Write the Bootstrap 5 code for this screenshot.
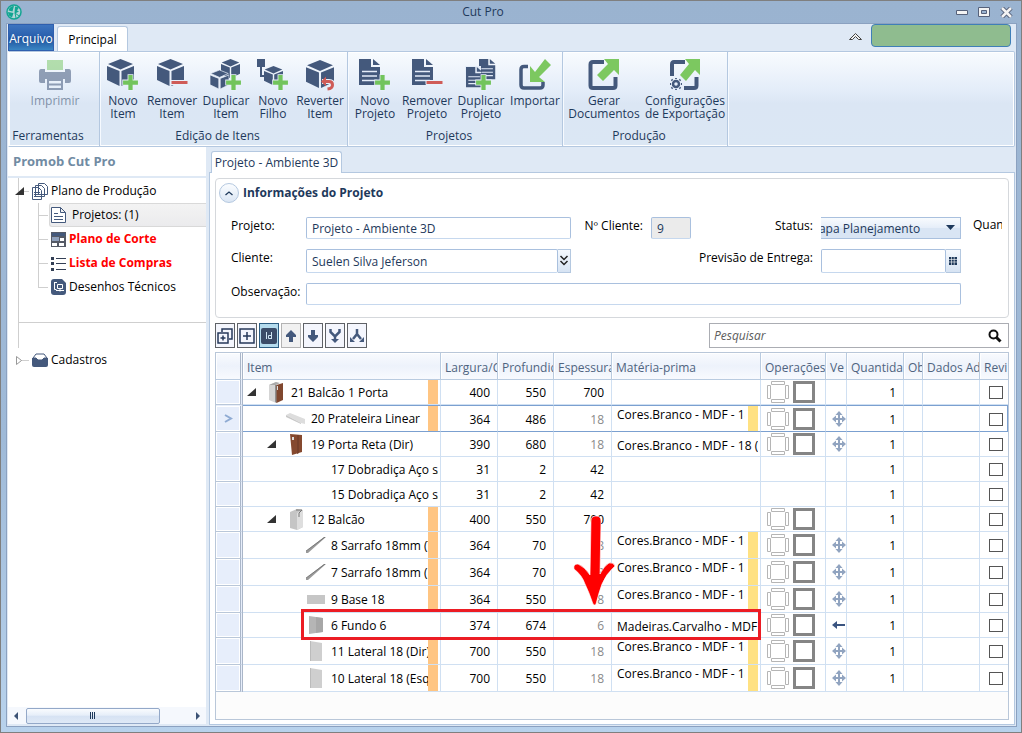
<!DOCTYPE html>
<html lang="pt-BR">
<head>
<meta charset="utf-8">
<meta name="viewport" content="width=device-width, initial-scale=1">
<title>Cut Pro</title>
<link href="https://cdn.jsdelivr.net/npm/bootstrap@5.3.0/dist/css/bootstrap.min.css" rel="stylesheet">
<style>
:root{--navy:#1e395b;--ico:#44597c;--line:#b4c8e0;--pane:#dfe9f5;--soft:#d0e0f2}
body{font:12px/16px "Open Sans","Noto Sans",sans-serif;color:#000}
button,input,select{font:inherit;color:inherit}
.win{min-height:100vh;border:1px solid #7f7f7f;background:linear-gradient(#9ab3d0,#9fbad8 60%,#b8d2ec);padding:0 4px 5px 5px}
.titlebar{height:22px;color:var(--navy)}
.titlebar .caption{padding-right:56px}
.winbtn{border:0;background:none;padding:0;width:22px;height:20px;line-height:0}
.client{border:1px solid #8ba1c0;background:var(--pane);padding:0 1px 1px}
.tabrow{height:27px}
.tab-file{width:46px;height:27px;border:1px solid #2f5fae;color:#fff;background:linear-gradient(#3d74bf,#2a60ae 45%,#1f529c 55%,#3a86c4);padding:2px 0 0;white-space:nowrap}
.tab-main{width:71px;height:25px;border:1px solid var(--line);border-bottom:0;border-radius:3px 3px 0 0;background:#fff;padding:2px 0 0;margin-left:3px}
.account{width:140px;height:23px;border:1px solid #3f7fb8;border-radius:4px;background:#8fbc8f}
.ribbon{height:96px;border:1px solid var(--line);border-left-color:#fff;border-radius:0 2px 2px 0;background:linear-gradient(#f8fbfe,#e4edf9 40%,#dbe6f4 55%,#dbe7f4);box-shadow:inset 0 0 0 1px #fff;color:var(--navy)}
.rgroup{border-right:1px solid var(--line);box-shadow:1px 0 0 #f6faff}
.rtools{display:grid;padding-top:7px;height:76px}
.rtools button{border:0;background:none;padding:0;line-height:13px;display:flex;flex-direction:column;align-items:center;white-space:nowrap}
.rtools svg{width:32px;height:32px;margin-bottom:3px;flex:none}
.rname{text-align:center;padding-right:12px}
.g1{width:91px}.g1 .rtools{grid-template-columns:92px}
.g2{width:248px}.g2 .rtools{grid-template-columns:46px 52px 56px 38px 56px}
.g3{width:215px}.g3 .rtools{grid-template-columns:54px 50px 58px 50px}
.g4{width:165px}.g4 .rtools{grid-template-columns:82px 80px}
.side{width:198px;background:#fff;margin-bottom:1px}
.side h1{font-size:13px;line-height:29px;font-weight:700;color:#718ba3;padding-left:5px;margin:0;border-bottom:2px solid var(--pane)}
.tree{margin-left:10px;border-left:1px solid #cfcfcf;height:170px;padding-top:1px}
.tree ul{background:linear-gradient(#cfcfcf,#cfcfcf) 0 0/1px calc(100% - 12px) no-repeat;margin:0 0 0 19px;padding:0}
.trow{height:24px;display:flex;align-items:center;position:relative;white-space:nowrap}
.trow::before{content:"";width:10px;border-top:1px solid #cfcfcf;margin-right:3px;flex:none}
.trow a{color:#000;text-decoration:none;display:flex;align-items:center;gap:3px;flex:1;height:24px}
.trow .hot{color:#f00;font-weight:700}
.trow .sel{background:linear-gradient(#f3f3f3,#ebebed);border:1px solid #d9d9d9;border-right:0;border-radius:3px 0 0 3px;margin-left:-2px;padding-left:1px;gap:6px}
.twist{position:absolute;left:-4px;top:8px;width:9px;height:9px}
.trow.base{margin-left:11px}
.cut{border-top:1px solid #cfcfcf;margin-top:23px}
.hbar{height:17px;background:#f5f8fd;margin-top:auto;padding:0 5px}
.hbar .thumb{width:134px;height:16px;border:1px solid #93a8c8;border-radius:2px;background:linear-gradient(#f9fbfe,#e6eef9 45%,#d6e2f3 50%,#dfe9f6)}
.main{margin-left:3px;min-width:0}
.doctab{height:22px;margin:4px 0 0 2px;width:131px;border:1px solid var(--line);border-bottom:0;border-radius:3px 3px 0 0;background:#fff;color:var(--navy);padding:0;white-space:nowrap;position:relative;z-index:1}
.sheet{border:1px solid var(--line);background:#fff;margin-top:-1px;padding:5px 5px 4px}
.info{border:1px solid #d5d8dc;border-radius:4px;height:140px;padding:3px 6px 0 3px;margin-bottom:5px}
.info h2{font-size:12px;line-height:20px;font-weight:700;color:var(--navy);margin:0;padding-top:1px}
.round{width:20px;height:20px;border:1px solid #b4c8e0;border-radius:50%;background:linear-gradient(#fbfdff,#dbe6f4);padding:0;line-height:0}
.fgrid{display:grid;grid-template-columns:75px 265px 80px 40px 130px 140px 1fr;grid-template-rows:22px 24px 22px;row-gap:10px;margin:14px 0 0 12px}
.fgrid label{line-height:18px;white-space:nowrap;overflow:hidden}
.fgrid .rt{text-align:right;padding-right:8px}
.fgrid .span2{grid-column:span 2}
.fgrid .span5{grid-column:span 5}
.fgrid .more{padding-left:12px}
.field{border:1px solid #a9c0de;border-bottom-color:#c6d8ee;border-radius:2px;background:#fff;color:var(--navy);padding:1px 5px 0;width:100%;min-width:0;height:100%}
.field:disabled{background:#ebebeb}
.side-btn{border:1px solid #b4c8e0;border-left:0;background:linear-gradient(#f5f9fe,#d6e3f3);padding:0;line-height:0;flex:none}
.pick{position:relative;overflow:hidden;border:solid #a9c0de;border-width:1px 1px 1px 0;background:linear-gradient(#f8fbfe,#e6eef9 48%,#d9e5f4 52%)}
.pick select{appearance:none;border:0;background:none;color:var(--navy);position:absolute;right:0;top:1px;width:162px;height:20px;padding:0 0 0 10px}
.pick svg{position:absolute;right:5px;top:7px}
.tools{gap:2px}
.tbtn{width:20px;height:25px;border:1px solid #5f6267;background:#f4f6fd;padding:0;line-height:0}
.tbtn.on{background:#b5dcee;border-color:#2c5d82}
.tbtn:disabled{background:#f1f1f1;border-color:#b3b3b3}
.find{width:300px;height:25px;border:1px solid #abadb3}
.find input{border:0;outline:0;font-style:italic;padding:0 4px;min-width:0;background:none}
.find input::placeholder{color:#5c5c5c;opacity:1}
.find button{border:0;background:none;padding:0 6px;line-height:0}
.gridbox{position:relative;border:1px solid #b9c7d9;background:#fcfcfc;margin-top:4px}
.grid{table-layout:fixed;width:100%;border-collapse:separate;border-spacing:0;background:#fff}
.grid th{height:27px;font-weight:400;color:#4f6480;border-right:1px solid #b9cbe0;border-bottom:1px solid #b9cbe0;background:linear-gradient(#f9fbfe,#edf2fb 50%,#f8fafe);padding:4px 0 0 4px;white-space:nowrap;overflow:hidden;box-shadow:inset 1px 1px 0 #fff}
.grid td{height:25px;padding:0;border-right:1px solid var(--soft);border-bottom:1px solid var(--soft);overflow:hidden;white-space:nowrap}
.grid .tall td{height:27px}
.grid th:last-child,.grid td:last-child{border-right:0;text-align:center}
.grid th:last-child{padding-right:4px}
.grid td:first-child{background:#e7eefb;border-right:3px double #aab6c8;border-bottom-color:#b9c7d9;box-shadow:inset 0 0 0 1px #fff;text-align:center;line-height:0}
.grid th:first-child{border-right:3px double #aab6c8}
.grid .num{text-align:right;padding-right:7px;padding-top:2px}
.grid .dim{color:#8a8a8a}
.grid .current td{border-top:1px solid #7ba0d0;border-bottom:1px solid #7ba0d0}
.grid .current td:last-child{border-right:1px solid #7ba0d0}
.grid .current td:first-child{border-top-color:#e7eefb;border-bottom-color:#b9c7d9}
.cellrow{display:flex;align-items:center;height:24px;margin-right:2px}
.tall .cellrow{height:26px}
.current .cellrow{height:25px}
.cellrow .label{flex:1;overflow:hidden;display:flex;gap:3px;padding:1px 0 0 2px}
.cellrow .mat{flex:1;overflow:hidden;padding:3px 0 0 5px}
.flagged .mat{align-self:flex-start;padding-top:1px;margin-right:3px}
.sw{flex:none;width:16px;line-height:0}
.pic{flex:none;width:26px;height:24px;display:flex;align-items:center;justify-content:center}
.lv0{padding-left:4px}.lv1{padding-left:24px}.lv2{padding-left:44px}
.bar{flex:none;width:10px;align-self:stretch}
.bar.o{background:#ffc582}.bar.y{background:#ffe182}
.ops{display:flex;gap:4px;padding-left:6px;line-height:0}
.grid .dir{padding-left:6px;line-height:0}
.grid input[type=checkbox]{appearance:none;width:14px;height:13px;border:1px solid #555;background:#fff;margin:0 0 0 4px;vertical-align:middle}
.redbox{position:absolute;left:85px;top:256px;width:460px;height:31px;border:3px solid #ec1c24;pointer-events:none}
.redarrow{position:absolute;left:357px;top:162px;width:42px;height:92px;pointer-events:none}
</style>
</head>
<body>
<svg width="0" height="0" class="position-absolute" aria-hidden="true">
<defs>
<symbol id="cube" viewBox="0 0 27 27"><path fill="#44597c" d="M13.500 0 26 5 13.500 10.500 1 5zM0 7l12.500 5v15L0 21zM27 7l-12.500 5v15L27 21z"/></symbol>
<symbol id="plus" viewBox="0 0 16 16"><path fill="#72c45c" stroke="#e8f0fa" stroke-width="1.500" paint-order="stroke" d="M6 1h4v5h5v4h-5v5H6v-5H1V6h5z"/></symbol>
<symbol id="page" viewBox="0 0 22 27"><path fill="#44597c" d="M0 0h12v8h9v18H0z"/><path fill="#44597c" d="M14 0l7 6h-7z"/><path stroke="#e4ecf8" stroke-width="1.500" fill="none" d="M3 12.500h8l7 0M3 17h15M3 21.500h15"/></symbol>
<symbol id="prn" viewBox="0 0 32 32"><g opacity=".55"><path fill="#7ec96c" d="M8 1h16v10H8z"/><path fill="#44597c" d="M2 10h4v3h20v-3h4q2 0 2 3v9q0 2-2 2h-4v-4H6v4H2q-2 0-2-2v-9q0-3 2-3z"/><path fill="none" stroke="#44597c" stroke-width="2" d="M9 21h14v9H9zM9 25.500h14"/></g></symbol>
<symbol id="ni" viewBox="0 0 32 32"><use href="#cube" width="27" height="27"/><use href="#plus" x="15" y="15" width="17" height="17"/></symbol>
<symbol id="ri" viewBox="0 0 32 32"><use href="#cube" x="1" width="27" height="27"/><path fill="#cf5c58" stroke="#e8f0fa" d="M15 21.500h17v4H15z"/></symbol>
<symbol id="di" viewBox="0 0 32 32"><use href="#cube" x="11" width="19" height="19"/><use href="#cube" x="0" y="11" width="19" height="19" stroke="#e8f0fa" stroke-width="1"/><use href="#plus" x="15" y="15" width="17" height="17"/></symbol>
<symbol id="nf" viewBox="0 0 32 32"><path fill="#44597c" d="M0 0h8v8H0z"/><path fill="none" stroke="#44597c" stroke-width="2" d="M4 7v10h5"/><use href="#cube" x="7" y="7" width="19" height="19"/><use href="#plus" x="15" y="15" width="17" height="17"/></symbol>
<symbol id="rv" viewBox="0 0 32 32"><use href="#cube" x="2" y="1" width="28" height="28"/><path fill="none" stroke="#e6eef9" stroke-width="5" d="M18 22.500h7q4 0 4 4t-5 4"/><path fill="none" stroke="#cf5c58" stroke-width="3" d="M20 22.500h5q3.500 0 3.500 3.500t-5 4"/><path fill="#cf5c58" d="M17 22.500l5-5v10z"/></symbol>
<symbol id="np" viewBox="0 0 32 32"><use href="#page" width="22" height="27"/><use href="#plus" x="15" y="15" width="17" height="17"/></symbol>
<symbol id="rp" viewBox="0 0 32 32"><use href="#page" x="1" width="22" height="27"/><path fill="#cf5c58" stroke="#e8f0fa" d="M15 21.500h17v4H15z"/></symbol>
<symbol id="dp" viewBox="0 0 32 32"><use href="#page" x="14" width="17" height="21"/><path fill="#e6eef9" d="M0 7h16v22H0z"/><use href="#page" x="1" y="8" width="17" height="21"/><use href="#plus" x="10" y="15" width="17" height="17"/></symbol>
<symbol id="im" viewBox="0 0 32 32"><path fill="none" stroke="#44597c" stroke-width="3.500" d="M9 7.500H5q-3 0-3 3V26q0 3 3 3h16q3 0 3-3v-3"/><path fill="#7cc860" d="M26 0l6 6-12 12 6 5H11V7l5 6z"/></symbol>
<symbol id="gd" viewBox="0 0 32 32"><path fill="none" stroke="#44597c" stroke-width="4" d="M16 3H5Q2.500 3 2.500 5.500v21q0 2.500 2.500 2.500h20q2.500 0 2.500-2.500V18"/><path fill="#7cc860" d="M16 0h15v16l-5-5-11 11-6-6 11-11z"/></symbol>
<symbol id="ce" viewBox="0 0 32 32"><path fill="none" stroke="#44597c" stroke-width="4" d="M16 3H5Q3 3 3 5.500V17M15 29h10q2.500 0 2.500-2.500V18"/><path fill="#7cc860" d="M16 0h15v16l-5-5-9 11-6-6 9-11z"/><circle cx="7" cy="25" r="3" fill="none" stroke="#44597c" stroke-width="2.500"/><path stroke="#44597c" stroke-width="1.800" d="M7 20v-1M7 30v1M2 25H1M12 25h1M3.500 21.500l-1-1M10.500 28.500l1 1M3.500 28.500l-1 1M10.500 21.500l1-1"/></symbol>
<symbol id="down" viewBox="0 0 9 9"><path fill="#333" d="M9 0v8H0z"/></symbol>
<symbol id="p21" viewBox="0 0 16 21"><path fill="#d5d5d5" d="M1 3l7-3v21l-7-3z"/><path fill="#aaa" d="M1 3l7-3 4 1-4 2z"/><path fill="#8f8f8f" d="M7 3h2v18l-2-1z"/><path fill="#80472f" d="M8.500 3L15 1v17l-6.500 3z"/><path stroke="#ddd" d="M9.500 4v4"/></symbol>
<symbol id="p20" viewBox="0 0 20 12"><path fill="#ddd" d="M0 2l4-2 15 6v5l-4-1z"/><path fill="#c8c8c8" d="M0 2l15 8v1L0 4z"/></symbol>
<symbol id="p19" viewBox="0 0 13 21"><path fill="#85492f" d="M0 0l12 1v17L2 21z"/><path fill="#76402a" d="M7 1h2v18l-2 1z"/><path fill="#ddd" d="M2 3h2v3H2z"/></symbol>
<symbol id="p12" viewBox="0 0 15 21"><path fill="#c5c5c5" d="M1 3l7-3 6 1v17l-6 3-7-2z"/><path fill="#dedede" d="M8 4l6-3v17l-6 3z"/><path fill="none" stroke="#777" d="M7 1h6L10 4v4"/></symbol>
<symbol id="pst" viewBox="0 0 20 16"><path fill="#9a9a9a" d="M0 14L18 0h2L2 16H0z"/><path stroke="#666" stroke-width=".7" d="M0 14L19 0"/></symbol>
<symbol id="pbs" viewBox="0 0 18 9"><path fill="#c6c6c6" d="M0 0h18v9H0z"/></symbol>
<symbol id="pfd" viewBox="0 0 14 18"><path fill="#b5b5b5" d="M0 0l14 2v14L0 18z"/><path fill="#999" opacity=".5" d="M7 1l7 1v14l-7 1z"/></symbol>
<symbol id="plt" viewBox="0 0 12 20"><path fill="#cfcfcf" d="M0 0l12 2v18L0 20z"/><path fill="#bbb" d="M0 0h1v20H0z"/></symbol>
<symbol id="bord" viewBox="0 0 22 22"><path fill="none" stroke="#b5b5b5" d="M4.500.500h13v3h-13zM4.500 18.500h13v3h-13zM.5 4.500h3v13h-3zM18.500 4.500h3v13h-3z"/></symbol>
<symbol id="sq" viewBox="0 0 22 22"><path fill="none" stroke="#858585" stroke-width="3" d="M1.500 1.500h19v19h-19z"/></symbol>
<symbol id="cross" viewBox="0 0 14 16"><path fill="none" stroke="#91a4c0" stroke-width="2" d="M7 2v12M2 8h10"/><path fill="#91a4c0" d="M7 0l3.500 4h-7zM7 16l3.500-4h-7zM0 8l4-3.500v7zM14 8l-4-3.500v7z"/></symbol>
<symbol id="left" viewBox="0 0 14 16"><path fill="none" stroke="#3a5480" stroke-width="2" d="M3 8h10"/><path fill="#3a5480" d="M0 8l5-4v8z"/></symbol>
</defs>
</svg>

<div class="win d-flex flex-column">
  <header class="titlebar d-flex align-items-center">
    <svg width="17" height="17" viewBox="0 0 17 17"><circle cx="8" cy="8" r="7" fill="#b4d6d8" stroke="#12a592" stroke-width="1.500"/><path fill="#12a592" d="M8 2A6 6 0 0 0 2.500 6.500l4 1zM2 8q0 4 4 5.500L7.500 9zM9 2.500l4 1-2 3 2 1-3 1.500H8.500z"/><path stroke="#12a592" d="M9 9l1 5M9 9l4 3"/></svg>
    <span class="caption flex-fill text-center ps-5">Cut Pro</span>
    <button class="winbtn" aria-label="Minimizar"><svg width="12" height="5"><path fill="#f3f3f3" stroke="#56617a" d="M.5.500h11v4H.5z"/></svg></button>
    <button class="winbtn" aria-label="Maximizar"><svg width="12" height="10"><path fill="#f3f3f3" stroke="#56617a" d="M.5.500h11v9H.5z"/><path fill="#9ab3d0" stroke="#56617a" d="M3.500 3.500h5v3h-5z"/></svg></button>
    <button class="winbtn" aria-label="Fechar"><svg width="13" height="11"><path stroke="#56617a" stroke-width="4.500" d="M2 1l9 9M11 1l-9 9"/><path stroke="#f3f3f3" stroke-width="2.500" d="M2 1l9 9M11 1l-9 9"/></svg></button>
  </header>

  <div class="client flex-fill d-flex flex-column">
    <div class="tabrow d-flex align-items-end">
      <button class="tab-file">Arquivo</button>
      <button class="tab-main">Principal</button>
      <div class="ms-auto d-flex align-items-center mb-1 pt-1">
        <button class="border-0 bg-transparent p-0 me-1 lh-1" aria-label="Recolher faixa"><svg width="15" height="9"><path fill="#f3f3f3" stroke="#444" d="M1.500 7.500l6-6 6 6h-3l-3-3-3 3z"/></svg></button>
        <button class="account ms-1 me-1" aria-label="Conta"></button>
      </div>
    </div>

    <nav class="ribbon d-flex" aria-label="Principal">
      <div class="rgroup g1"><div class="rtools"><button><svg><use href="#prn"/></svg><span class="opacity-50">Imprimir</span></button></div><div class="rname">Ferramentas</div></div>
      <div class="rgroup g2"><div class="rtools">
        <button><svg><use href="#ni"/></svg>Novo<br>Item</button>
        <button><svg><use href="#ri"/></svg>Remover<br>Item</button>
        <button><svg><use href="#di"/></svg>Duplicar<br>Item</button>
        <button><svg><use href="#nf"/></svg>Novo<br>Filho</button>
        <button><svg><use href="#rv"/></svg>Reverter<br>Item</button></div><div class="rname">Edição de Itens</div></div>
      <div class="rgroup g3"><div class="rtools">
        <button><svg><use href="#np"/></svg>Novo<br>Projeto</button>
        <button><svg><use href="#rp"/></svg>Remover<br>Projeto</button>
        <button><svg><use href="#dp"/></svg>Duplicar<br>Projeto</button>
        <button><svg><use href="#im"/></svg>Importar</button></div><div class="rname">Projetos</div></div>
      <div class="rgroup g4"><div class="rtools">
        <button><svg><use href="#gd"/></svg>Gerar<br>Documentos</button>
        <button><svg><use href="#ce"/></svg>Configurações<br>de Exportação</button></div><div class="rname">Produção</div></div>
    </nav>

    <div class="flex-fill d-flex">
      <aside class="side d-flex flex-column flex-shrink-0">
        <h1>Promob Cut Pro</h1>
        <div class="tree">
          <div class="trow"><svg class="twist"><use href="#down"/></svg><a href="#"><svg width="16" height="17" fill="#fff" stroke="#44597c"><path d="M6.500.500h6l3 3v8h-9zM3.500 2.500h6l3 3v8h-9zM.5 4.500h6l3 3v9h-9z"/><path d="M2 9.500h6M2 11.500h6M2 13.500h6"/></svg>Plano de Produção</a></div>
          <ul class="list-unstyled">
            <li class="trow"><a href="#" class="sel"><svg width="15" height="16" fill="#fff" stroke="#44597c"><path d="M.5.500h9l5 5v10H.5zM9.500.500v5h5"/><path d="M3 6.500h4M3 9.500h9M3 12.500h9"/></svg>Projetos: (1)</a></li>
            <li class="trow"><a href="#" class="hot"><svg width="15" height="15"><path fill="#555a66" d="M0 0h15v15H0z"/><path fill="#44597c" d="M1 1h13v3H1z"/><path fill="#8fa0bb" d="M1 5h7v4H1z"/><path fill="#fff" d="M9 6h4v3H9zM1 11h5v3H1zM8 11h5v3H8z"/></svg>Plano de Corte</a></li>
            <li class="trow"><a href="#" class="hot"><svg width="15" height="15"><path fill="#333f55" d="M0 1h3v3H0zM0 6h3v3H0zM0 12h3v3H0zM5 2h10v1H5zM5 7h10v1H5zM5 13h10v1H5z"/></svg>Lista de Compras</a></li>
            <li class="trow"><a href="#"><svg width="15" height="16"><path fill="#44597c" d="M3 0h8l4 4v9q0 3-3 3H3q-3 0-3-3V3q0-3 3-3z"/><path fill="none" stroke="#fff" d="M3.500 3v7.500h2M3 3.500h3M6.500 5.500h5v4h-5zM5 11.500h8M9 9.500v3"/></svg>Desenhos Técnicos</a></li>
          </ul>
          <div class="cut"></div>
        </div>
        <div class="trow base"><svg class="twist"><path fill="#fff" stroke="#999" d="M1.500.500l5 4-5 4z"/></svg><a href="#"><svg width="16" height="14"><path fill="#44597c" d="M0 5h16v7q0 2-2 2H2q-2 0-2-2z"/><path fill="#fff" stroke="#44597c" d="M1 5l3-4h8l3 4h-3l-2 2H6L4 5z"/></svg>Cadastros</a></div>
        <div class="hbar d-flex align-items-center"><svg width="5" height="8"><path fill="#3b5275" d="M5 0v8L1 4z"/></svg><div class="thumb ms-2 d-flex align-items-center justify-content-center"><svg width="6" height="7"><path stroke="#1e395b" d="M.5 0v7M2.500 0v7M4.500 0v7"/></svg></div><svg class="ms-auto" width="5" height="8"><path fill="#3b5275" d="M0 0v8l4-4z"/></svg></div>
      </aside>

      <main class="main flex-fill d-flex flex-column">
        <button class="doctab">Projeto - Ambiente 3D</button>
        <div class="sheet flex-fill d-flex flex-column">
          <section class="info">
            <div class="d-flex align-items-center gap-1"><button class="round" aria-label="Recolher"><svg width="10" height="6"><path fill="none" stroke="#1e395b" stroke-width="1.300" d="M1.500 5L5 2l3.500 3"/></svg></button><h2>Informações do Projeto</h2></div>
            <form class="fgrid">
              <label for="fp">Projeto:</label><input id="fp" class="field" value="Projeto - Ambiente 3D">
              <label class="rt" for="fn">Nº Cliente:</label><input id="fn" class="field" value="9" disabled>
              <label class="rt" for="fs">Status:</label>
              <div class="pick"><select id="fs"><option>Etapa Planejamento</option></select><svg width="9" height="5"><path fill="#1e395b" d="M0 0h9L4.500 5z"/></svg></div>
              <span class="more overflow-hidden">Quan</span>
              <label for="fc">Cliente:</label>
              <div class="d-flex"><input id="fc" class="field" value="Suelen Silva Jeferson"><button type="button" class="side-btn" aria-label="Abrir lista"><svg width="12" height="12"><path fill="none" stroke="#222" stroke-width="1.500" d="M2.500 1L6 4.500 9.500 1M2.500 6L6 9.500 9.500 6"/></svg></button></div>
              <span></span><label class="rt span2" for="fe">Previsão de Entrega:</label>
              <div class="d-flex"><input id="fe" class="field"><button type="button" class="side-btn" aria-label="Calendário"><svg width="14" height="8"><path fill="#1e395b" d="M3 0h8v8H3z"/><path stroke="#fff" stroke-width=".6" d="M3 2.500h8M3 5h8M5.500 0v8M8.200 0v8"/></svg></button></div>
              <span></span>
              <label for="fo">Observação:</label><div class="span5"><input id="fo" class="field"></div>
            </form>
          </section>

          <div class="d-flex">
            <div class="tools d-flex">
              <button class="tbtn" aria-label="Expandir tudo"><svg width="16" height="16" fill="none" stroke="#26395a" stroke-width="1.500"><path d="M5 4V1h10v10h-3M1 5h10v10H1zM6 7.500v5M3.500 10h5"/></svg></button>
              <button class="tbtn" aria-label="Expandir"><svg width="16" height="16" fill="none" stroke="#26395a" stroke-width="1.500"><path d="M1 1h14v14H1zM8 4v8M4 8h8"/></svg></button>
              <button class="tbtn on" aria-label="Id"><svg width="16" height="16"><rect width="16" height="16" rx="2" fill="#3b4c68"/><path fill="none" stroke="#cfe4f2" d="M5.500 4v7M10.500 4v7M10 7.500H7.500v3H10"/></svg></button>
              <button class="tbtn" disabled aria-label="Subir"><svg width="12" height="12"><path fill="#44597c" d="M6 0l5 5v2H8v5H4V7H1V5z"/></svg></button>
              <button class="tbtn" aria-label="Descer"><svg width="12" height="12"><path fill="#44597c" d="M6 12l5-5V5H8V0H4v5H1v2z"/></svg></button>
              <button class="tbtn" aria-label="Unir"><svg width="14" height="14"><path fill="none" stroke="#44597c" stroke-width="2.500" d="M2.500 0v3L7 7.500 11.500 3V0M7 7v5"/><path fill="#44597c" d="M7 14l4-4H3z"/></svg></button>
              <button class="tbtn" aria-label="Separar"><svg width="14" height="14"><path fill="none" stroke="#44597c" stroke-width="2.500" d="M7 0v5L3 10M7 5l4 5"/><path fill="#44597c" d="M0 13V8l5 5zM14 13V8l-5 5z"/></svg></button>
            </div>
            <div class="find ms-auto d-flex align-items-center"><input class="flex-fill" placeholder="Pesquisar" aria-label="Pesquisar"><button aria-label="Buscar"><svg width="14" height="14"><circle cx="5.500" cy="5.500" r="4" fill="none" stroke="#111" stroke-width="2"/><path stroke="#111" stroke-width="3" d="M8.500 8.500l4 4"/></svg></button></div>
          </div>

          <div class="gridbox flex-fill">
            <table class="grid">
              <colgroup><col style="width:27px"><col style="width:198px"><col style="width:57px"><col style="width:56px"><col style="width:58px"><col style="width:149px"><col style="width:65px"><col style="width:21px"><col style="width:57px"><col style="width:19px"><col style="width:57px"><col></colgroup>
              <thead><tr><th></th><th>Item</th><th>Largura/C</th><th>Profundid</th><th>Espessura</th><th>Matéria-prima</th><th>Operações</th><th>Ve</th><th>Quantida</th><th>Ob</th><th>Dados Ad</th><th>Revi</th></tr></thead>
              <tbody id="rows"></tbody>
            </table>
            <div class="redbox"></div>
            <svg class="redarrow" viewBox="0 0 42 92"><path fill="#f00" stroke="#fff" stroke-opacity=".6" stroke-width="1" d="M18 6q0-5 5-5t5 5l-1 53q4-8 9-11 4-1 6 3-9 8-13 18-3 8-6 20-1 2-3 0-4-12-8-20Q9 60 1 54q-1-5 4-5 7 3 12 11z"/></svg>
          </div>
        </div>
      </main>
    </div>
  </div>
</div>

<script src="https://cdn.jsdelivr.net/npm/bootstrap@5.3.0/dist/js/bootstrap.bundle.min.js"></script>
<script>
const branco = 'Cores.Branco - MDF - 18 (2F)';
// level, open, picture [id,w,h], id, name, orange, width, depth, thickness, editable thickness, material, yellow, direction, tall
const rows = [
 [0,1,['p21',16,21],21,'Balcão 1 Porta',1,400,550,700,1,'',0,'',0],
 [1,0,['p20',20,12],20,'Prateleira Linear',1,364,486,18,0,branco,1,'cross',1],
 [1,1,['p19',13,21],19,'Porta Reta (Dir)',0,390,680,18,0,branco,0,'cross',0],
 [2,0,null,17,'Dobradiça Aço s/Amort',0,31,2,42,1,'',0,null,0],
 [2,0,null,15,'Dobradiça Aço s/Amort',0,31,2,42,1,'',0,null,0],
 [1,1,['p12',15,21],12,'Balcão',1,400,550,700,1,'',0,'',0],
 [2,0,['pst',20,16],8,'Sarrafo 18mm (Tras)',1,364,70,18,0,branco,1,'cross',1],
 [2,0,['pst',20,16],7,'Sarrafo 18mm (Fren)',1,364,70,18,0,branco,1,'cross',1],
 [2,0,['pbs',18,9],9,'Base 18',1,364,550,18,0,branco,1,'cross',1],
 [2,0,['pfd',14,18],6,'Fundo 6',0,374,674,6,0,'Madeiras.Carvalho - MDF - 6',0,'left',0],
 [2,0,['plt',12,20],11,'Lateral 18 (Dir)',1,700,550,18,0,branco,1,'cross',1],
 [2,0,['plt',12,20],10,'Lateral 18 (Esq)',1,700,550,18,0,branco,1,'cross',1]
];
const icon = (id,w,h) => `<svg width="${w}" height="${h}"><use href="#${id}"/></svg>`;
document.getElementById('rows').innerHTML = rows.map((r,i) => {
  const [lv,open,pic,id,name,o,w,d,t,ed,mat,y,dir,tall] = r;
  return `<tr class="${tall?'tall':''} ${i===1?'current':''}">
  <td>${i===1?'<svg width="9" height="9"><path fill="none" stroke="#8fabd3" stroke-width="2" d="M1 1l6 3.500L1 8"/></svg>':''}</td>
  <td><div class="cellrow lv${lv}"><span class="sw">${open?icon('down',9,9):''}</span><span class="pic">${pic?icon(...pic):''}</span><span class="label"><span>${id}</span><span>${name}</span></span>${o?'<span class="bar o"></span>':''}</div></td>
  <td class="num">${w}</td><td class="num">${d}</td><td class="num ${ed?'':'dim'}">${t}</td>
  <td><div class="cellrow ${y?'flagged':''}"><span class="mat">${mat}</span>${y?'<span class="bar y"></span>':''}</div></td>
  <td>${dir===null?'':`<div class="ops">${icon('bord',22,22)}${icon('sq',22,22)}</div>`}</td>
  <td class="dir">${dir?icon(dir,14,16):''}</td>
  <td class="num">1</td><td></td><td></td><td><input type="checkbox" aria-label="Revisado ${id}"></td></tr>`;
}).join('');
</script>
</body>
</html>
